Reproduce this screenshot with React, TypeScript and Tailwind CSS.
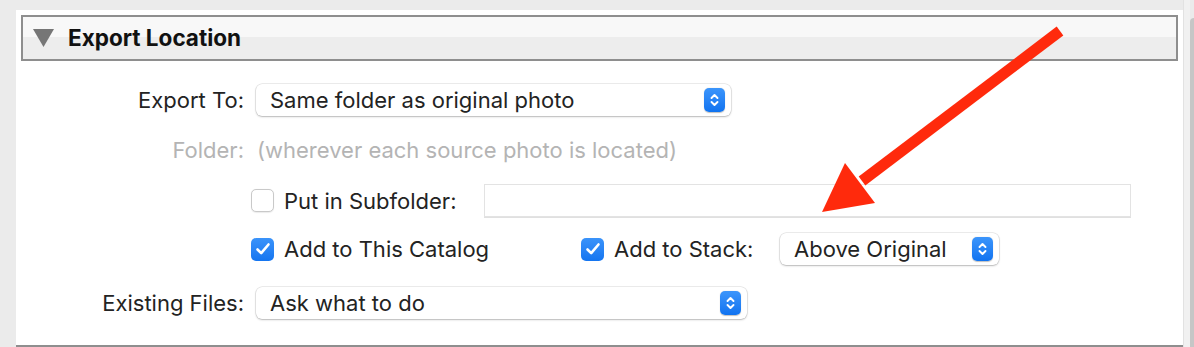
import React from "react";

const font = { fontFamily: "Inter, 'Liberation Sans', sans-serif" };

function Stepper() {
  return (
    <div className="w-[21px] h-[24px] rounded-[5px] bg-gradient-to-b from-[#3b95fb] to-[#0f73f0] flex items-center justify-center shadow-[0_0.5px_1px_rgba(0,0,0,0.25)]">
      <svg width="11" height="16" viewBox="0 0 11 16" fill="none" stroke="white" strokeWidth="1.9" strokeLinecap="round" strokeLinejoin="round">
        <path d="M2.5 6 L5.5 3 L8.5 6" />
        <path d="M2.5 10 L5.5 13 L8.5 10" />
      </svg>
    </div>
  );
}

function Select({ text, width }: { text: string; width: string }) {
  return (
    <div className={`${width} h-[32px] bg-white rounded-[6px] shadow-[0_0_0_0.5px_rgba(0,0,0,0.14),0_1px_2px_rgba(0,0,0,0.22)] flex items-center justify-between pl-[14px] pr-[6px]`}>
      <span className="text-[22px] text-[#232323] leading-none">{text}</span>
      <Stepper />
    </div>
  );
}

function Checkbox({ checked }: { checked?: boolean }) {
  if (checked) {
    return (
      <div className="w-[23px] h-[23px] rounded-[5px] bg-gradient-to-b from-[#3a93fa] to-[#1475f0] flex items-center justify-center shrink-0">
        <svg width="16" height="14" viewBox="0 0 16 14" fill="none" stroke="white" strokeWidth="2.6" strokeLinecap="round" strokeLinejoin="round">
          <path d="M2.5 7.5 L6.2 11.2 L13.5 2.5" />
        </svg>
      </div>
    );
  }
  return <div className="w-[23px] h-[23px] rounded-[5px] bg-white border border-[#c9c9c9] shadow-[0_0.5px_1px_rgba(0,0,0,0.08)] shrink-0" />;
}

export default function App() {
  return (
    <div className="w-[1194px] h-[347px] bg-[#ebebeb] overflow-hidden relative flex" style={font}>
      <div className="ml-[16px] mt-[10px] w-[1167px] h-[337px] bg-white border-b-2 border-[#8e8e8e] flex flex-col">
        {/* header */}
        <div className="ml-[5px] mt-[5px] w-[1157px] h-[46px] border-2 border-[#8e8e8e] flex flex-col relative">
          <div className="h-[20px] bg-[#f8f8f8]" />
          <div className="flex-1 bg-[#ededed]" />
          <div className="absolute inset-0 flex items-center pl-[10px]">
            <svg width="21" height="18" viewBox="0 0 21 18">
              <path d="M0 0 H21 L10.5 18 Z" fill="#767676" />
            </svg>
            <span className="ml-[14px] text-[22.5px] font-bold text-[#111] leading-none">Export Location</span>
          </div>
        </div>

        {/* Export To */}
        <div className="mt-[23px] h-[32px] flex items-center">
          <div className="w-[228px] text-right text-[22px] text-[#232323] leading-none">Export To:</div>
          <div className="ml-[12px]">
            <Select text="Same folder as original photo" width="w-[475px]" />
          </div>
        </div>

        {/* Folder */}
        <div className="mt-[18px] h-[32px] flex items-center">
          <div className="w-[228px] text-right text-[22px] text-[#b4b4b4] leading-none">Folder:</div>
          <div className="ml-[13px] text-[22px] text-[#b4b4b4] leading-none">(wherever each source photo is located)</div>
        </div>

        {/* Subfolder */}
        <div className="mt-[18px] h-[33px] flex items-center">
          <div className="ml-[235px] flex items-center">
            <Checkbox />
            <span className="ml-[10px] text-[22px] text-[#232323] leading-none">Put in Subfolder:</span>
          </div>
          <div className="ml-auto mr-[52px] w-[647px] h-[33px] bg-white border border-[#e3e3e3] shadow-[0_1px_0_rgba(0,0,0,0.12)]" />
        </div>

        {/* Catalog / Stack */}
        <div className="mt-[16px] h-[32px] flex items-center">
          <div className="ml-[235px] w-[330px] flex items-center">
            <Checkbox checked />
            <span className="ml-[10px] text-[22px] text-[#232323] leading-none">Add to This Catalog</span>
          </div>
          <div className="w-[199px] flex items-center">
            <Checkbox checked />
            <span className="ml-[10px] text-[22px] text-[#232323] leading-none">Add to Stack:</span>
          </div>
          <Select text="Above Original" width="w-[219px]" />
        </div>

        {/* Existing Files */}
        <div className="mt-[22px] h-[32px] flex items-center">
          <div className="w-[228px] text-right text-[22px] text-[#232323] leading-none">Existing Files:</div>
          <div className="ml-[12px]">
            <Select text="Ask what to do" width="w-[491px]" />
          </div>
        </div>
      </div>

      {/* right edge strip and scrollbar */}
      <div className="w-[7px] h-full bg-[#f1f1f1] border-l border-[#e2e2e2]" />
      <div className="mt-[18px] w-[4px] h-full bg-[#c6c6c6] rounded-tl-[4px]" />

      {/* red arrow annotation */}
      <svg className="absolute left-0 top-0 pointer-events-none" width="1194" height="347" viewBox="0 0 1194 347">
        <line x1="1060" y1="31" x2="862" y2="181" stroke="#ff2a0c" strokeWidth="11" strokeLinecap="butt" />
        <polygon points="822,212 845,163 875,203" fill="#ff2a0c" />
      </svg>
    </div>
  );
}
